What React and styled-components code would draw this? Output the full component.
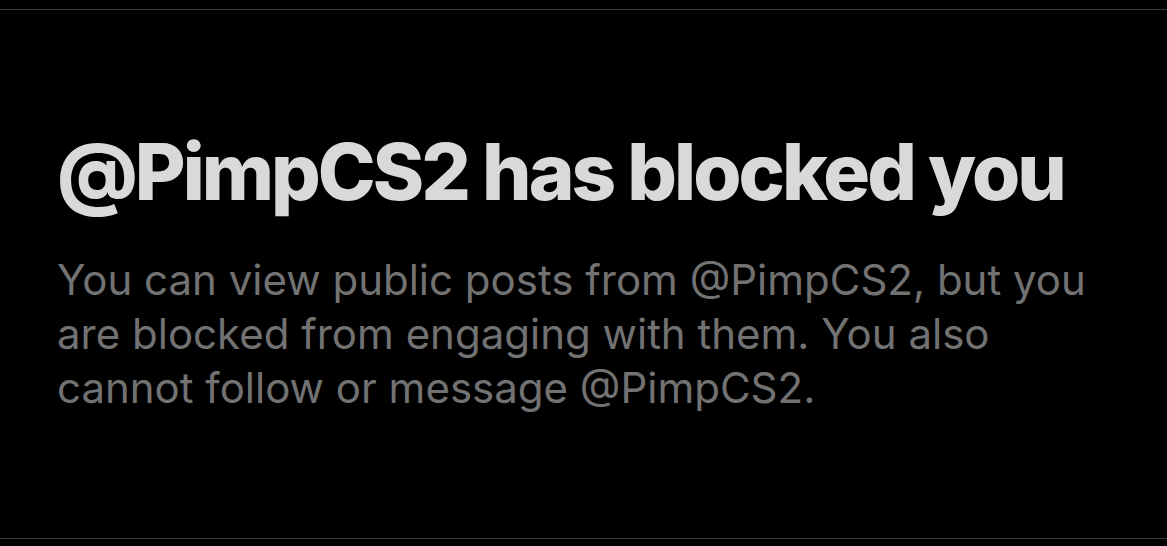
import React from "react";
import styled, { createGlobalStyle } from "styled-components";

const GlobalStyle = createGlobalStyle`
  html, body {
    margin: 0;
    padding: 0;
    background: #000;
  }
  body {
    font-family: Inter, "Noto Sans", sans-serif;
    -webkit-font-smoothing: antialiased;
  }
`;

const Page = styled.div`
  width: 1167px;
  height: 546px;
  background: #000;
  padding-top: 9px;
  box-sizing: border-box;
`;

const Panel = styled.section`
  height: 530px;
  box-sizing: border-box;
  border-top: 1px solid #3a3a3c;
  border-bottom: 1px solid #3a3a3c;
  padding: 123px 0 0 57px;
  display: flex;
  flex-direction: column;
`;

const Title = styled.h1`
  margin: 0 0 42px;
  font-family: Inter, "Noto Sans", sans-serif;
  font-weight: 800;
  font-size: 78px;
  line-height: 78px;
  letter-spacing: -3px;
  color: #d9d9d9;
  white-space: nowrap;
`;

const Body = styled.p`
  margin: 0;
  width: 1100px;
  font-family: Inter, "Noto Sans", sans-serif;
  font-weight: 400;
  font-size: 42px;
  line-height: 54px;
  letter-spacing: 0;
  color: #727272;
`;

export default function App() {
  return (
    <>
      <GlobalStyle />
      <Page>
        <Panel>
          <Title>@PimpCS2 has blocked you</Title>
          <Body>
            You can view public posts from @PimpCS2, but you<br />
            are blocked from engaging with them. You also<br />
            cannot follow or message @PimpCS2.
          </Body>
        </Panel>
      </Page>
    </>
  );
}
